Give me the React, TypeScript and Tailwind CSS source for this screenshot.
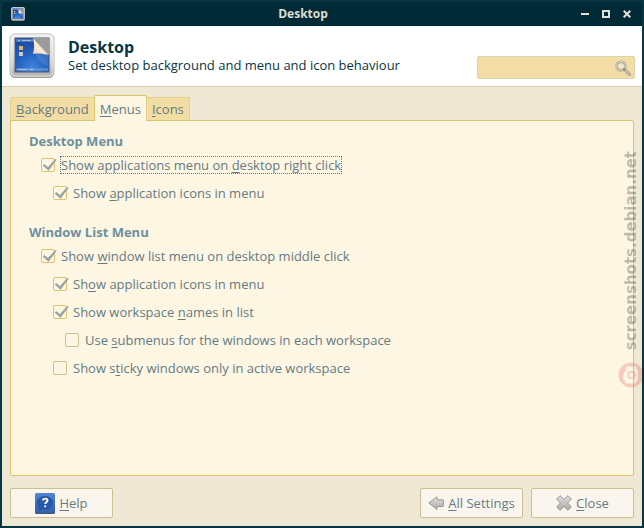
import { useState, type ReactNode } from "react";

type Option = {
  id: string;
  indent: string;
  label: ReactNode;
  focused?: boolean;
};

function Key({ children }: { children: ReactNode }) {
  return <span className="underline decoration-1 underline-offset-2">{children}</span>;
}

const desktopOptions: Option[] = [
  { id: "desktop-menu", indent: "pl-3", focused: true, label: <>Show applications menu on <Key>d</Key>esktop right click</> },
  { id: "desktop-icons", indent: "pl-6", label: <>Show <Key>a</Key>pplication icons in menu</> },
];

const windowOptions: Option[] = [
  { id: "window-menu", indent: "pl-3", label: <>Show <Key>w</Key>indow list menu on desktop middle click</> },
  { id: "window-icons", indent: "pl-6", label: <>Sh<Key>o</Key>w application icons in menu</> },
  { id: "workspace-names", indent: "pl-6", label: <>Show workspace <Key>n</Key>ames in list</> },
  { id: "submenus", indent: "pl-9", label: <>Use <Key>s</Key>ubmenus for the windows in each workspace</> },
  { id: "sticky", indent: "pl-6", label: <>Show s<Key>t</Key>icky windows only in active workspace</> },
];

function DesktopIcon({ className }: { className: string }) {
  return (
    <svg viewBox="0 0 46 46" className={className} aria-hidden="true">
      <defs>
        <linearGradient id="frame" x1="0" y1="0" x2="0" y2="1">
          <stop offset="0" stopColor="#f2f2f1" />
          <stop offset="0.6" stopColor="#d8d8d6" />
          <stop offset="1" stopColor="#b0b0ae" />
        </linearGradient>
        <radialGradient id="screen" cx="0.5" cy="0.9" r="0.95">
          <stop offset="0" stopColor="#3d86dc" />
          <stop offset="0.5" stopColor="#235fbd" />
          <stop offset="1" stopColor="#1a4799" />
        </radialGradient>
        <linearGradient id="fold" x1="0" y1="0.9" x2="0.8" y2="0.2">
          <stop offset="0" stopColor="#f0cfae" />
          <stop offset="0.45" stopColor="#fbeedd" />
          <stop offset="1" stopColor="#c99a78" />
        </linearGradient>
      </defs>
      <rect x="1" y="2" width="44" height="43" rx="5" fill="#555" opacity="0.7" />
      <rect x="1" y="1" width="44" height="43" rx="5" fill="url(#frame)" stroke="#b4b4b2" />
      <rect x="2" y="2" width="42" height="41" rx="4" fill="none" stroke="#fff" opacity="0.6" />
      <rect x="6" y="5" width="34" height="34" fill="url(#screen)" stroke="#4a5a7c" />
      <path d="M7 6h18v3H7zM7 35h32v3H7z" fill="#7fa6dc" opacity="0.5" />
      <path d="M9 7.500h2M13 7.500h9M9 36.500h9M21 36.500h3" stroke="#dce8f8" opacity="0.6" />
      <path d="M26 20c4-1 9 0 13 1v12c-6-2-11-6-13-13z" fill="#7eb2f2" opacity="0.25" />
      <rect x="10" y="13" width="4" height="4" fill="#e2b75c" />
      <rect x="10" y="19" width="4" height="4" fill="#c9cbc8" />
      <path d="M24 5h16v17z" fill="#9b9c99" />
      <path d="M24 5l16 17c-5-1-10-2-16-1c1.500-6 1.500-11 0-16z" fill="url(#fold)" />
    </svg>
  );
}

function SearchIcon() {
  return (
    <svg viewBox="0 0 16 16" className="size-4" aria-hidden="true">
      <circle cx="6" cy="6" r="4.3" fill="#efe5c8" stroke="#969280" strokeWidth="2.4" />
      <circle cx="6" cy="6" r="4.3" fill="none" stroke="#dedac9" strokeWidth="1.2" />
      <path d="M9.500 9.500l5 5" stroke="#969280" strokeWidth="3" strokeLinecap="round" />
      <path d="M10.500 10.500l4 4" stroke="#d2cdbb" strokeWidth="1.400" strokeLinecap="round" />
    </svg>
  );
}

function HelpIcon() {
  return (
    <svg viewBox="0 0 20 21" className="h-[21px] w-5" aria-hidden="true">
      <defs>
        <linearGradient id="help" x1="0" y1="0" x2="0" y2="1">
          <stop offset="0" stopColor="#5285d2" />
          <stop offset="1" stopColor="#2f5fae" />
        </linearGradient>
      </defs>
      <rect x="0" y="1" width="20" height="20" rx="1.5" fill="#4b5563" />
      <rect x="0" y="0" width="20" height="20" rx="1.5" fill="url(#help)" />
      <path d="M10 3.500c4.500 0 7.500 2.700 7.500 6.300S14.500 16 10 16c-.9 0-1.700-.1-2.500-.3L4.500 17l.6-2.400C3.400 13.500 2.500 11.800 2.500 9.800 2.500 6.200 5.500 3.500 10 3.500z" fill="#2858a8" stroke="#1d4a94" strokeWidth="0.6" />
      <path d="M7.600 7.300c.5-1.200 1.300-1.700 2.500-1.700 1.500 0 2.400.8 2.400 2 0 1.700-2.300 1.800-2.300 3.500M10.200 12.600v1.700" fill="none" stroke="#fff" strokeWidth="1.900" />
    </svg>
  );
}

function BackIcon() {
  return (
    <svg viewBox="0 0 16 14" className="h-3.5 w-4" aria-hidden="true">
      <defs>
        <linearGradient id="back" x1="0" y1="0" x2="0" y2="1">
          <stop offset="0" stopColor="#e4e4e2" />
          <stop offset="1" stopColor="#a9aaa8" />
        </linearGradient>
      </defs>
      <path d="M.7 7L9 .8v3h6.300v6.700H9v3z" fill="url(#back)" stroke="#9a9b97" strokeLinejoin="round" />
    </svg>
  );
}

function CloseIcon() {
  return (
    <svg viewBox="0 0 16 16" className="size-4" aria-hidden="true">
      <defs>
        <linearGradient id="cross" x1="0" y1="0" x2="0" y2="1">
          <stop offset="0" stopColor="#dededc" />
          <stop offset="1" stopColor="#a9aaa7" />
        </linearGradient>
      </defs>
      <path d="M4 .7L8 4.400 12 .7 15.300 4 11.600 8l3.700 4-3.300 3.300L8 11.600l-4 3.700L.7 12l3.700-4L.7 4z" fill="url(#cross)" stroke="#979895" strokeLinejoin="round" />
    </svg>
  );
}

function CheckRow({ option, checked, onToggle }: { option: Option; checked: boolean; onToggle: () => void }) {
  return (
    <div className={`flex h-7 items-center ${option.indent}`}>
      <label htmlFor={option.id} className="flex items-center gap-1.5">
        <span className="relative size-3.5">
          <input
            id={option.id}
            type="checkbox"
            checked={checked}
            onChange={onToggle}
            className="block size-3.5 appearance-none rounded-xs border border-[#cbbf94] outline-none checked:border-[#e0c268]"
          />
          {checked && (
            <svg viewBox="0 0 16 14" className="pointer-events-none absolute top-0 left-0 h-3.5 w-4 overflow-visible" aria-hidden="true">
              <path d="M2 7.500l1.500-1 3.500 3L14 1.500l1.300.2-7.800 10.700z" fill="#93a1a1" stroke="#93a1a1" strokeWidth="0.6" />
            </svg>
          )}
        </span>
        <span className={option.focused ? "leading-4 outline-1 outline-dotted outline-[#657b83]" : "leading-4"}>{option.label}</span>
      </label>
    </div>
  );
}

function Watermark() {
  return (
    <div className="pointer-events-none absolute top-[149px] -right-0.5 flex flex-col items-center gap-3">
      <span className="rotate-180 font-['DejaVu_Sans',sans-serif] text-[15px] leading-4 font-bold text-black/25 [writing-mode:vertical-rl]">
        screenshots.debian.net
      </span>
      <svg viewBox="0 0 26 26" className="size-[26px]" aria-hidden="true">
        <path
          fillRule="evenodd"
          d="M13 .5a12.500 12.500 0 1 0 0 25a12.500 12.500 0 1 0 0-25zM9 4.500h8c1 0 1.500.6 1.500 1.500s.5 1.500 1.500 1.500v11c-1 0-1.500.6-1.500 1.500s-.5 1.500-1.500 1.500H9c-1 0-1.500-.6-1.500-1.500S7 18.500 5.500 18.500v-7L7.500 9V6c0-.9.5-1.500 1.500-1.500z"
          fill="#e45a5a"
          opacity="0.27"
        />
        <circle cx="13.500" cy="13" r="3.300" fill="none" stroke="#e45a5a" strokeWidth="1.500" opacity="0.3" />
      </svg>
    </div>
  );
}

const buttonClass = "flex h-[30px] w-[103px] items-center justify-center gap-1 rounded-xs border border-[#cbbf94] bg-[#faf6ee]";

export default function App() {
  const [tab, setTab] = useState("Menus");
  const [query, setQuery] = useState("");
  const [checked, setChecked] = useState<string[]>([
    "desktop-menu",
    "desktop-icons",
    "window-menu",
    "window-icons",
    "workspace-names",
  ]);

  function toggle(id: string) {
    setChecked((prev) => (prev.includes(id) ? prev.filter((x) => x !== id) : [...prev, id]));
  }

  const renderOptions = (options: Option[]) =>
    options.map((o) => <CheckRow key={o.id} option={o} checked={checked.includes(o.id)} onToggle={() => toggle(o.id)} />);

  return (
    <div className="relative flex min-h-screen flex-col overflow-hidden border-2 border-[#073642] bg-[#eee8d5] font-['Open_Sans',sans-serif] text-[13px] leading-5 text-[#657b83]">
      <header className="flex h-6 items-center bg-[#002b36] px-2">
        <DesktopIcon className="ml-px size-3.5" />
        <h1 className="flex-1 text-center text-xs font-bold text-[#dfdcd0]">Desktop</h1>
        <div className="flex justify-end gap-[13px] pr-[3px] text-[#e3e0d6]">
          <button aria-label="Minimize">
            <svg viewBox="0 0 8 8" className="size-2"><path d="M0 3h8v2H0z" fill="currentColor" /></svg>
          </button>
          <button aria-label="Maximize">
            <svg viewBox="0 0 8 8" className="size-2"><path d="M1 1h6v6H1z" fill="none" stroke="currentColor" strokeWidth="2" /></svg>
          </button>
          <button aria-label="Close window">
            <svg viewBox="0 0 8 8" className="size-2"><path d="M.7.7l6.600 6.600M7.300.7L.7 7.300" stroke="currentColor" strokeWidth="2" /></svg>
          </button>
        </div>
      </header>

      <div className="flex items-end border-b border-[#d9cfa6] bg-white px-[7px] pb-[7px] text-[#073642]">
        <DesktopIcon className="mt-[7px] size-[46px]" />
        <div className="flex-1 self-center pt-1 pl-[13px]">
          <h2 className="text-base leading-5 font-bold">Desktop</h2>
          <p className="leading-4">Set desktop background and menu and icon behaviour</p>
        </div>
        <div className="flex h-[23px] w-[158px] items-center rounded-xs border border-[#ddd3ac] bg-[#f2dda4] pr-[3px]">
          <input
            type="text"
            aria-label="Search settings"
            value={query}
            onChange={(e) => setQuery(e.target.value)}
            className="min-w-0 flex-1 px-1 outline-none"
          />
          <SearchIcon />
        </div>
      </div>

      <main className="flex flex-1 flex-col p-2">
        <div role="tablist" className="relative z-10 -mb-px flex items-end">
          {["Background", "Menus", "Icons"].map((name) => (
            <button
              key={name}
              role="tab"
              aria-selected={tab === name}
              onClick={() => setTab(name)}
              className={
                tab === name
                  ? "-mx-px h-[26px] rounded-t-xs border border-b-0 border-[#e0c268] bg-[#fdf6e3] px-[5px]"
                  : "h-6 rounded-t-xs border border-[#e5cf8f] border-b-[#e0c268] bg-[#f2dda4] px-[5px]"
              }
            >
              <Key>{name[0]}</Key>{name.slice(1)}
            </button>
          ))}
        </div>

        <div role="tabpanel" className="flex-1 rounded-xs border border-[#e0c268] bg-[#fdf6e3] px-[18px] py-2.5">
          <h3 className="font-bold text-[#6c919e]">Desktop Menu</h3>
          {renderOptions(desktopOptions)}
          <h3 className="mt-[15px] font-bold text-[#6c919e]">Window List Menu</h3>
          {renderOptions(windowOptions)}
        </div>

        <footer className="mt-3 flex gap-2">
          <button className={`${buttonClass} mr-auto`}>
            <HelpIcon />
            <span><Key>H</Key>elp</span>
          </button>
          <button className={buttonClass}>
            <BackIcon />
            <span><Key>A</Key>ll Settings</span>
          </button>
          <button className={buttonClass}>
            <CloseIcon />
            <span><Key>C</Key>lose</span>
          </button>
        </footer>
      </main>

      <Watermark />
    </div>
  );
}
